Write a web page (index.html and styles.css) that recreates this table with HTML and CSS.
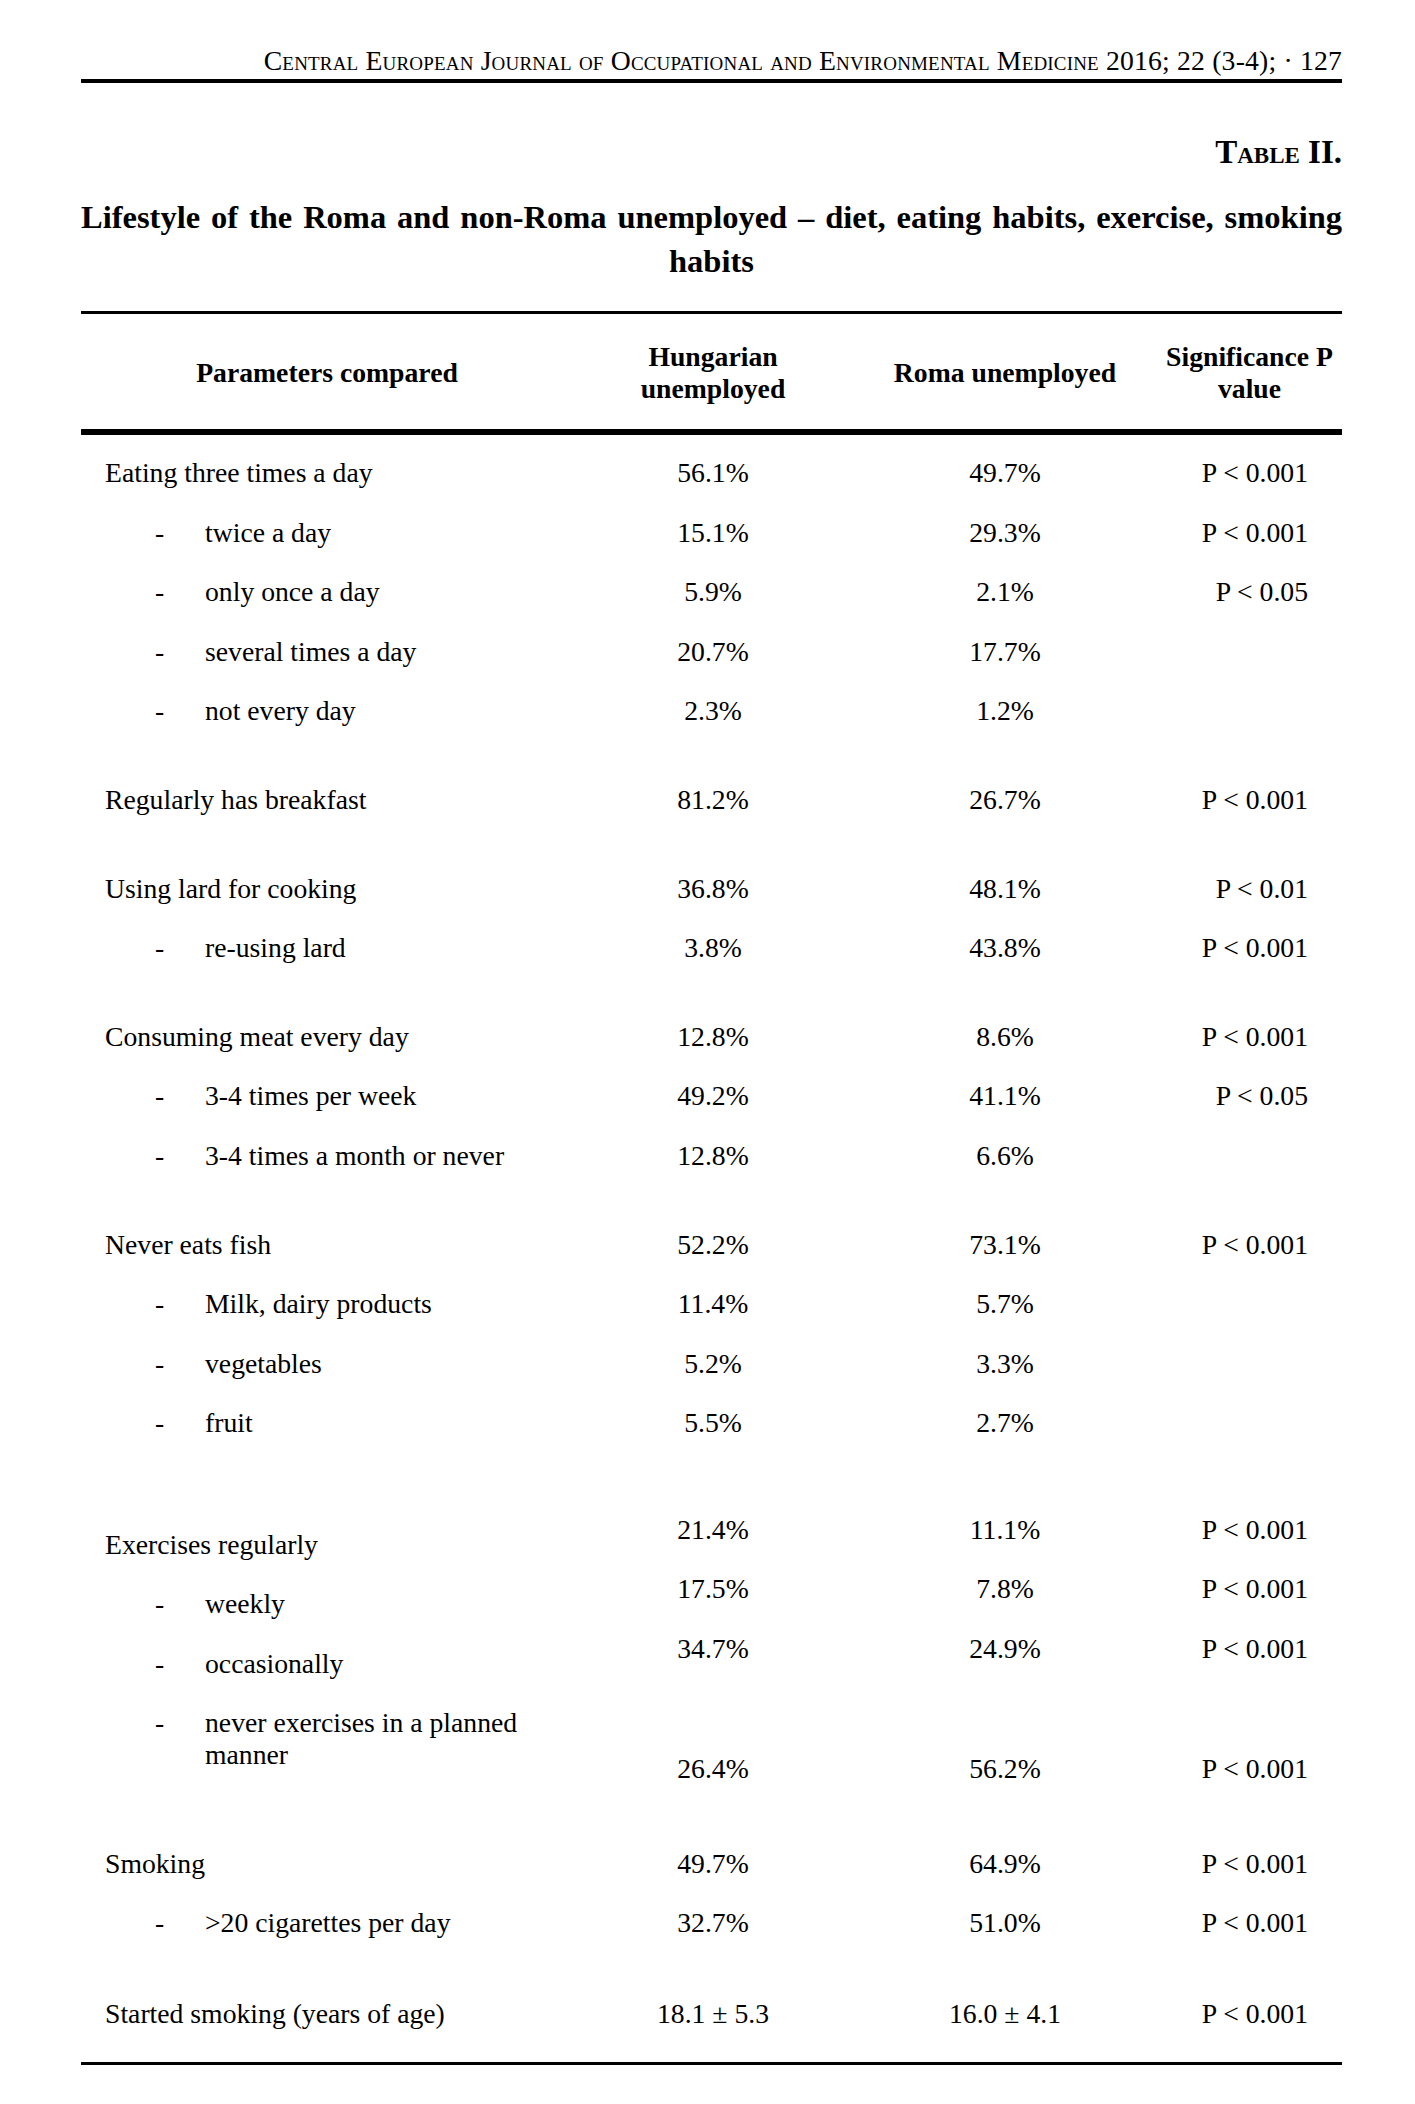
FILE: index.html
```html
<!DOCTYPE html>
<html lang="en">
<head>
<meta charset="utf-8">
<title>Table II. Lifestyle of the Roma and non-Roma unemployed</title>
<link rel="stylesheet" href="styles.css">
</head>
<body>
<div class="page">
  <header class="running-head">Central European Journal of Occupational and Environmental Medicine 2016; 22 (3-4); · 127</header>
  <div class="table-no">Table II.</div>
  <h1 class="title">Lifestyle of the Roma and non-Roma unemployed – diet, eating habits, exercise, smoking habits</h1>
  <table class="data">
    <colgroup>
      <col class="c-lbl"><col class="c-hu"><col class="c-ro"><col class="c-p">
    </colgroup>
    <thead>
      <tr>
        <th>Parameters compared</th>
        <th>Hungarian<br>unemployed</th>
        <th>Roma unemployed</th>
        <th>Significance P<br>value</th>
      </tr>
    </thead>
    <tbody>
      <tr class="first"><td class="lbl">Eating three times a day</td><td class="num">56.1%</td><td class="num">49.7%</td><td class="p">P &lt; 0.001</td></tr>
      <tr><td class="lbl sub"><span class="dash">-</span>twice a day</td><td class="num">15.1%</td><td class="num">29.3%</td><td class="p">P &lt; 0.001</td></tr>
      <tr><td class="lbl sub"><span class="dash">-</span>only once a day</td><td class="num">5.9%</td><td class="num">2.1%</td><td class="p">P &lt; 0.05</td></tr>
      <tr><td class="lbl sub"><span class="dash">-</span>several times a day</td><td class="num">20.7%</td><td class="num">17.7%</td><td class="p"></td></tr>
      <tr><td class="lbl sub"><span class="dash">-</span>not every day</td><td class="num">2.3%</td><td class="num">1.2%</td><td class="p"></td></tr>

      <tr class="grp"><td class="lbl">Regularly has breakfast</td><td class="num">81.2%</td><td class="num">26.7%</td><td class="p">P &lt; 0.001</td></tr>

      <tr class="grp"><td class="lbl">Using lard for cooking</td><td class="num">36.8%</td><td class="num">48.1%</td><td class="p">P &lt; 0.01</td></tr>
      <tr><td class="lbl sub"><span class="dash">-</span>re-using lard</td><td class="num">3.8%</td><td class="num">43.8%</td><td class="p">P &lt; 0.001</td></tr>

      <tr class="grp"><td class="lbl">Consuming meat every day</td><td class="num">12.8%</td><td class="num">8.6%</td><td class="p">P &lt; 0.001</td></tr>
      <tr><td class="lbl sub"><span class="dash">-</span>3-4 times per week</td><td class="num">49.2%</td><td class="num">41.1%</td><td class="p">P &lt; 0.05</td></tr>
      <tr><td class="lbl sub"><span class="dash">-</span>3-4 times a month or never</td><td class="num">12.8%</td><td class="num">6.6%</td><td class="p"></td></tr>

      <tr class="grp"><td class="lbl">Never eats fish</td><td class="num">52.2%</td><td class="num">73.1%</td><td class="p">P &lt; 0.001</td></tr>
      <tr><td class="lbl sub"><span class="dash">-</span>Milk, dairy products</td><td class="num">11.4%</td><td class="num">5.7%</td><td class="p"></td></tr>
      <tr><td class="lbl sub"><span class="dash">-</span>vegetables</td><td class="num">5.2%</td><td class="num">3.3%</td><td class="p"></td></tr>
      <tr><td class="lbl sub"><span class="dash">-</span>fruit</td><td class="num">5.5%</td><td class="num">2.7%</td><td class="p"></td></tr>

      <tr class="ex ex-first"><td class="lbl">Exercises regularly</td><td class="num">21.4%</td><td class="num">11.1%</td><td class="p">P &lt; 0.001</td></tr>
      <tr class="ex"><td class="lbl sub"><span class="dash">-</span>weekly</td><td class="num">17.5%</td><td class="num">7.8%</td><td class="p">P &lt; 0.001</td></tr>
      <tr class="ex"><td class="lbl sub"><span class="dash">-</span>occasionally</td><td class="num">34.7%</td><td class="num">24.9%</td><td class="p">P &lt; 0.001</td></tr>
      <tr class="ex-two"><td class="lbl sub"><span class="dash">-</span>never exercises in a planned manner</td><td class="num">26.4%</td><td class="num">56.2%</td><td class="p">P &lt; 0.001</td></tr>

      <tr class="grp-smoke"><td class="lbl">Smoking</td><td class="num">49.7%</td><td class="num">64.9%</td><td class="p">P &lt; 0.001</td></tr>
      <tr><td class="lbl sub"><span class="dash">-</span>&gt;20 cigarettes per day</td><td class="num">32.7%</td><td class="num">51.0%</td><td class="p">P &lt; 0.001</td></tr>

      <tr class="grp-last"><td class="lbl">Started smoking (years of age)</td><td class="num">18.1 ± 5.3</td><td class="num">16.0 ± 4.1</td><td class="p">P &lt; 0.001</td></tr>
    </tbody>
  </table>
</div>
</body>
</html>
```

FILE: styles.css
```css
html, body {
  margin: 0;
  padding: 0;
  background: #ffffff;
}

body {
  font-family: "Liberation Serif", "Times New Roman", serif;
  color: #000000;
}

.page {
  width: 1261px;
  margin-left: 81px;
}

.running-head {
  font-size: 27.7px;
  line-height: 32px;
  letter-spacing: 0.18px;
  font-variant: small-caps;
  text-align: right;
  padding: 44.5px 0 2.5px 0;
  border-bottom: 4px solid #000;
}

.table-no {
  font-size: 33px;
  line-height: 36px;
  font-weight: bold;
  font-variant: small-caps;
  text-align: right;
  margin-top: 51px;
}

.title {
  margin: 24.5px 0 0 0;
  font-size: 32.5px;
  line-height: 44px;
  font-weight: bold;
  text-align: justify;
  text-align-last: center;
}

.data {
  margin-top: 28px;
  width: 1261px;
  table-layout: fixed;
  border-collapse: separate;
  border-spacing: 0;
  font-size: 27.7px;
  line-height: 32px;
}

.c-lbl { width: 492px; }
.c-hu { width: 280px; }
.c-ro { width: 304px; }
.c-p { width: 185px; }

.data th {
  font-weight: bold;
  text-align: center;
  vertical-align: middle;
  line-height: 32px;
  padding: 27.5px 0 23.5px 0;
  border-top: 3px solid #000;
  border-bottom: 6px solid #000;
}

.data td {
  vertical-align: top;
  padding: 14px 0 13.6px 0;
}

.data td.lbl {
  text-align: left;
  padding-left: 24px;
}

.data td.lbl.sub {
  padding-left: 124px;
  text-indent: -50px;
}

.dash {
  display: inline-block;
  width: 50px;
  text-indent: 0;
}

.data td.num {
  text-align: center;
}

.data td.p {
  text-align: right;
  padding-right: 34px;
}

.data tr.first td { padding-top: 22.6px; }

.data tr.grp td { padding-top: 43px; }

/* exercise group: labels sit lower than their figures */
.data tr.ex td { padding-top: 7px; padding-bottom: 20.6px; }
.data tr.ex td.lbl { padding-top: 22px; padding-bottom: 5.6px; }
.data tr.ex-first td { padding-top: 60.6px; }
.data tr.ex-first td.lbl { padding-top: 75.6px; }

.data tr.ex-two td { padding-top: 67.2px; padding-bottom: 13.6px; }
.data tr.ex-two td.lbl { padding-top: 21.2px; padding-bottom: 27.6px; }

.data tr.grp-smoke td { padding-top: 49.4px; }

.data tr.grp-last td {
  padding-top: 45.5px;
  padding-bottom: 31.3px;
  border-bottom: 3px solid #000;
}
```
